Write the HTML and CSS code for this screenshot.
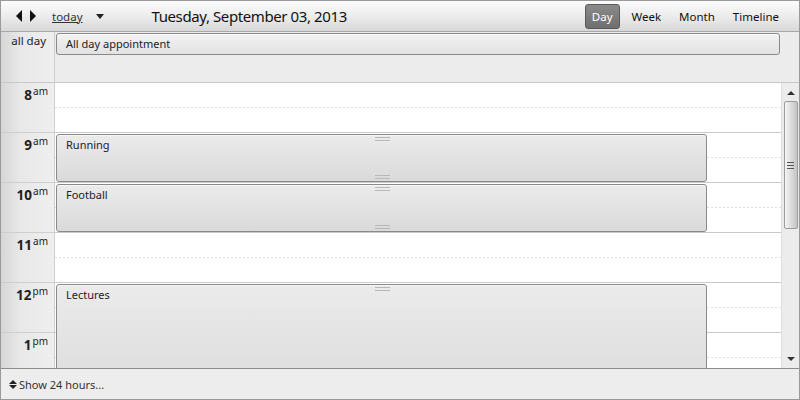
FILE: index.html
```html
<!DOCTYPE html>
<html>
<head>
<meta charset="utf-8">
<link rel="stylesheet" href="styles.css">
</head>
<body>
<div class="cal">
  <div class="header">
    <div class="nav">
      <span class="arrow arrow-left"></span>
      <span class="arrow arrow-right"></span>
    </div>
    <a class="today">today</a>
    <span class="drop"></span>
    <div class="title">Tuesday, September 03, 2013</div>
    <div class="views">
      <span class="view active">Day</span>
      <span class="view">Week</span>
      <span class="view">Month</span>
      <span class="view">Timeline</span>
    </div>
  </div>
  <div class="allday">
    <div class="timecol allday-label">all day</div>
    <div class="allday-area">
      <div class="allday-appt">All day appointment</div>
    </div>
    <div class="allday-pad"></div>
  </div>
  <div class="body">
    <div class="scroller">
      <div class="timecol hours">
        <div class="hour"><span class="h">8</span><span class="ap">am</span></div>
        <div class="hour"><span class="h">9</span><span class="ap">am</span></div>
        <div class="hour"><span class="h">10</span><span class="ap">am</span></div>
        <div class="hour"><span class="h">11</span><span class="ap">am</span></div>
        <div class="hour"><span class="h">12</span><span class="ap">pm</span></div>
        <div class="hour"><span class="h">1</span><span class="ap">pm</span></div>
      </div>
      <div class="daycol">
        <div class="slot"></div>
        <div class="slot"></div>
        <div class="slot"></div>
        <div class="slot"></div>
        <div class="slot"></div>
        <div class="slot"></div>
        <div class="event" style="top:51px;height:48px"><span class="grip grip-top"></span>Running<span class="grip grip-bottom"></span></div>
        <div class="event" style="top:101px;height:48px"><span class="grip grip-top"></span>Football<span class="grip grip-bottom"></span></div>
        <div class="event" style="top:201px;height:120px"><span class="grip grip-top"></span>Lectures</div>
      </div>
    </div>
    <div class="scrollbar">
      <span class="sb-up"></span>
      <div class="thumb"><span class="thumb-grip"></span></div>
      <span class="sb-down"></span>
    </div>
  </div>
  <div class="footer">
    <span class="updown"><span class="ud-up"></span><span class="ud-down"></span></span>
    <span class="show">Show 24 hours...</span>
  </div>
</div>
</body>
</html>
```
FILE: styles.css
```css
* { box-sizing: border-box; }
html, body { margin: 0; padding: 0; background: #fff; }
body { font-family: "Noto Sans", "Open Sans", sans-serif; font-size: 11px; color: #222; }

.cal {
  width: 800px;
  height: 400px;
  border: 1px solid #9a9a9a;
  display: flex;
  flex-direction: column;
  overflow: hidden;
  background: #fff;
}

.header {
  height: 31px;
  flex: none;
  display: flex;
  align-items: center;
  background: linear-gradient(to bottom, #fbfbfb 0%, #eeeeee 45%, #d8d8d8 100%);
  border-bottom: 1px solid #a8a8a8;
  padding-left: 15px;
}
.nav { display: flex; gap: 8px; align-items: center; }
.arrow { width: 0; height: 0; border-top: 6px solid transparent; border-bottom: 6px solid transparent; }
.arrow-left { border-right: 6px solid #111; }
.arrow-right { border-left: 6px solid #111; }
.today {
  margin-left: 16px;
  color: #333;
  text-decoration: underline;
  font-size: 11.5px;
}
.drop {
  margin-left: 13px;
  width: 0; height: 0;
  border-left: 4px solid transparent;
  border-right: 4px solid transparent;
  border-top: 5px solid #222;
  margin-top: 1px;
}
.title {
  margin-left: 48px;
  font-size: 15px;
  color: #111;
  letter-spacing: -0.4px;
}
.views { margin-left: auto; display: flex; align-items: center; padding-right: 11px; }
.view {
  font-size: 11.5px;
  color: #111;
  padding: 0 8px;
  line-height: 23px;
  border: 1px solid transparent;
  border-radius: 3px;
}
.view.active {
  color: #fff;
  background: linear-gradient(to bottom, #8a8a8a, #6f6f6f);
  border: 1px solid #5a5a5a;
  padding: 0 6px;
  margin-right: 3px;
}

.allday {
  height: 51px;
  flex: none;
  display: flex;
  border-bottom: 1px solid #c8c8c8;
  background: #ececec;
}
.timecol {
  width: 54px;
  flex: none;
  border-right: 1px solid #cfcfcf;
  background: linear-gradient(to right, #d6d6d6 0%, #e8e8e8 35%, #efefef 100%);
}
.allday-label { text-align: right; padding: 1px 8px 0 0; color: #222; font-size: 11.5px; }
.allday-area { flex: 1; padding: 1px 1px 0 1px; }
.allday-pad { width: 18px; flex: none; }
.allday-appt {
  height: 22px;
  border: 1px solid #8a8a8a;
  border-radius: 3px;
  background: linear-gradient(to bottom, #f2f2f2, #e2e2e2);
  box-shadow: inset 0 1px 0 #fafafa;
  padding: 2px 0 0 9px;
  font-size: 11px;
  color: #222;
}

.body { flex: 1; display: flex; min-height: 0; }
.scroller { flex: 1; display: flex; overflow: hidden; }
.hours { display: flex; flex-direction: column; }
.hour {
  height: 50px;
  flex: none;
  border-bottom: 1px solid #cfcfcf;
  text-align: right;
  padding: 1px 6px 0 0;
  color: #222;
}
.h { font-size: 13.5px; font-weight: bold; line-height: 16px; }
.ap { font-size: 10px; vertical-align: 5px; margin-left: 1px; }

.daycol { flex: 1; position: relative; display: flex; flex-direction: column; }
.slot {
  height: 50px;
  flex: none;
  border-bottom: 1px solid #c9c9c9;
  background: #fff;
  background-image: linear-gradient(to right, #dedede 50%, transparent 50%);
  background-size: 4px 1px;
  background-repeat: repeat-x;
  background-position: 0 24px;
}
.event {
  position: absolute;
  left: 1px;
  width: 651px;
  border: 1px solid #8a8a8a;
  border-radius: 3px;
  background: linear-gradient(to bottom, #ebebeb 0%, #dadada 100%);
  box-shadow: inset 0 1px 0 #f6f6f6;
  padding: 2px 0 0 9px;
  font-size: 11px;
  color: #222;
}
.grip {
  position: absolute;
  left: 318px;
  width: 15px;
  height: 4px;
  border-top: 1px solid #b8b8b8;
  border-bottom: 1px solid #b8b8b8;
}
.grip-top { top: 2px; }
.grip-bottom { bottom: 2px; }

.scrollbar {
  width: 18px;
  flex: none;
  background: #ececec;
  border-left: 1px solid #e0e0e0;
  position: relative;
  display: flex;
  flex-direction: column;
  align-items: center;
}
.sb-up {
  margin-top: 8px;
  width: 0; height: 0;
  border-left: 4px solid transparent;
  border-right: 4px solid transparent;
  border-bottom: 4px solid #333;
}
.thumb {
  margin-top: 6px;
  width: 14px;
  height: 128px;
  border: 1px solid #9c9c9c;
  border-radius: 2px;
  background: linear-gradient(to right, #f4f4f4, #dcdcdc 50%, #c4c4c4);
  display: flex;
  align-items: center;
  justify-content: center;
}
.thumb-grip {
  width: 7px;
  height: 7px;
  border-top: 1px solid #555;
  border-bottom: 1px solid #555;
  background: linear-gradient(#555, #555) center/100% 1px no-repeat;
}
.sb-down {
  margin-top: auto;
  margin-bottom: 7px;
  width: 0; height: 0;
  border-left: 4px solid transparent;
  border-right: 4px solid transparent;
  border-top: 4px solid #333;
}

.footer {
  height: 31px;
  flex: none;
  border-top: 1px solid #8e8e8e;
  background: #ededed;
  display: flex;
  align-items: center;
  padding-left: 8px;
}
.updown { display: flex; flex-direction: column; gap: 1px; margin-right: 2px; }
.ud-up { width: 0; height: 0; border-left: 4px solid transparent; border-right: 4px solid transparent; border-bottom: 4px solid #222; }
.ud-down { width: 0; height: 0; border-left: 4px solid transparent; border-right: 4px solid transparent; border-top: 4px solid #222; }
.show { font-size: 11px; color: #333; }
```
